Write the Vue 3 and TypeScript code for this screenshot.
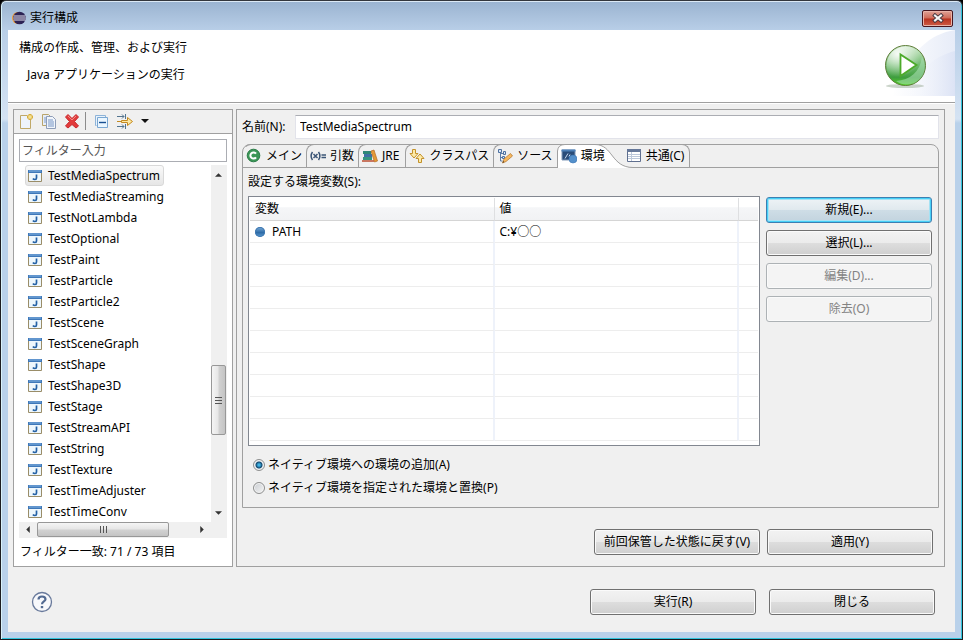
<script setup lang="ts">
import { ref } from 'vue'

interface Tab {
  id: string
  label: string
}

interface EnvVar {
  name: string
  value: string
}

const configs: string[] = [
  'TestMediaSpectrum', 'TestMediaStreaming', 'TestNotLambda', 'TestOptional',
  'TestPaint', 'TestParticle', 'TestParticle2', 'TestScene', 'TestSceneGraph',
  'TestShape', 'TestShape3D', 'TestStage', 'TestStreamAPI', 'TestString',
  'TestTexture', 'TestTimeAdjuster', 'TestTimeConv',
]
const selected = ref('TestMediaSpectrum')

const tabs: Tab[] = [
  { id: 'main', label: 'メイン' },
  { id: 'args', label: '引数' },
  { id: 'jre', label: 'JRE' },
  { id: 'classpath', label: 'クラスパス' },
  { id: 'source', label: 'ソース' },
  { id: 'env', label: '環境' },
  { id: 'common', label: '共通(C)' },
]
const activeTab = ref('env')

const variables: EnvVar[] = [{ name: 'PATH', value: 'C:¥○○' }]
const emptyRows = 9

const configName = ref('TestMediaSpectrum')
const filterText = ref('')
const mode = ref('append')
</script>

<template>
  <div class="window" lang="ja">
    <header class="titlebar">
      <svg class="logo" width="14" height="14" viewBox="0 0 14 14" aria-hidden="true">
        <circle cx="6" cy="7" r="6" fill="#f39a2e" />
        <circle cx="7.5" cy="7" r="6.3" fill="#2c2255" />
        <path d="M1.6 5h11.8M1.3 7h12.4M1.6 9h11.8" stroke="#e8e6f4" stroke-width="1" />
      </svg>
      <span class="title">実行構成</span>
      <button class="close" type="button" aria-label="閉じる">
        <svg width="12" height="10" viewBox="0 0 12 10">
          <path d="M3 2.500 9 7.500M9 2.500 3 7.500" stroke="#4b3a42" stroke-width="4" stroke-linecap="square" />
          <path d="M3 2.500 9 7.500M9 2.500 3 7.500" stroke="#f6f6f6" stroke-width="2" stroke-linecap="square" />
        </svg>
      </button>
    </header>

    <div class="client">
      <section class="banner">
        <div class="banner-text">
          <h1>構成の作成、管理、および実行</h1>
          <p>Java アプリケーションの実行</p>
        </div>
        <svg class="banner-art" width="75" height="66" viewBox="0 0 75 66" aria-hidden="true">
          <defs>
            <linearGradient id="sky" x1="0" y1="0" x2="1" y2="0">
              <stop offset="0" stop-color="#fff" />
              <stop offset="1" stop-color="#dde4f5" />
            </linearGradient>
            <linearGradient id="sky2" x1="0" y1="0" x2="1" y2="0">
              <stop offset="0" stop-color="#fff" stop-opacity="0" />
              <stop offset="1" stop-color="#dce3f5" />
            </linearGradient>
            <linearGradient id="ball" x1="0" y1="0" x2="0" y2="1">
              <stop offset="0" stop-color="#cfe9cb" />
              <stop offset="0.5" stop-color="#6db96c" />
              <stop offset="0.8" stop-color="#3f9e3f" />
              <stop offset="1" stop-color="#52d51e" />
            </linearGradient>
            <radialGradient id="shine" cx="0.3" cy="0.2" r="0.6">
              <stop offset="0" stop-color="#fff" stop-opacity="0.9" />
              <stop offset="1" stop-color="#fff" stop-opacity="0" />
            </radialGradient>
          </defs>
          <path d="M75 0C50 4 30 20 12 66H75Z" fill="url(#sky)" opacity="0.7" />
          <path d="M75 21C54 26 36 42 24 66H75Z" fill="url(#sky2)" />
          <ellipse cx="25" cy="56" rx="19" ry="2" fill="#a9b8a6" opacity="0.6" />
          <circle cx="25.500" cy="35.500" r="20" fill="url(#ball)" stroke="#5f7d3a" />
          <circle cx="25.500" cy="35.500" r="19" fill="url(#shine)" />
          <path d="M42 27A18 18 0 0 1 16 51C30 50 40 42 42 27Z" fill="#a6dcb0" opacity="0.6" />
          <path d="M20.500 24.500V46L36.500 35Z" fill="#fff" stroke="#4caa2a" stroke-width="1.800" />
        </svg>
      </section>

      <main class="panels">
        <aside class="sidebar">
          <div class="toolbar">
            <button type="button" aria-label="新規">
              <svg width="16" height="16" viewBox="0 0 16 16">
                <path d="M2.500 2.500H9l3.500 4V15.500H2.500Z" fill="#eef3fa" stroke="#c0a868" />
                <path d="M12 1v6M9 4h6" stroke="#d7ae3d" stroke-width="3" />
                <path d="M12 2v4M10 4h4" stroke="#fff2b0" />
              </svg>
            </button>
            <button type="button" aria-label="複製">
              <svg width="16" height="16" viewBox="0 0 16 16">
                <path d="M1.500 1.500h6l2 2v9h-8Z" fill="#e8eef7" stroke="#b9a46b" />
                <path d="M3 5h2M3 7h2M3 9h2" stroke="#7e9cc9" />
                <path d="M5.500 3.500h6l3 3v9h-9Z" fill="#f1f5fb" stroke="#8e9db8" />
                <path d="M7 7h5M7 9h6M7 11h6M7 13h6" stroke="#7795c4" />
              </svg>
            </button>
            <button type="button" aria-label="削除">
              <svg width="16" height="16" viewBox="0 0 16 16">
                <path d="M4 1.500 8 5.500 12 1.500 14.500 4 10.500 8.500 14.500 13 12 15 8 11.500 4 15 1.500 13 5.500 8.500 1.500 4Z" fill="#e23b3b" stroke="#c92a2f" />
                <path d="M4 3l4 4 4-4" stroke="#f48b84" fill="none" />
              </svg>
            </button>
            <span class="divider"></span>
            <button type="button" aria-label="すべて縮小表示">
              <svg width="16" height="16" viewBox="0 0 16 16">
                <path d="M3.500 12.500h-1v-10h10v2" fill="#eaf3fc" stroke="#8db3d8" />
                <path d="M4.500 4.500h10v10h-10Z" fill="#eaf6ff" stroke="#7aa7d2" />
                <path d="M6 9.500h7" stroke="#174f91" stroke-width="1.400" />
              </svg>
            </button>
            <button class="filter-button" type="button" aria-label="フィルター">
              <svg width="28" height="16" viewBox="0 0 28 16">
                <path d="M0 3.500h7M5 1.500l2 2-2 2M8.500 1v5M0 13.500h7M5 11.500l2 2-2 2M8.500 11v5" fill="none" stroke="#52748f" />
                <path d="M0 8.500h4" stroke="#c48a20" />
                <path d="M4.500 7.500h6v-3l5 4-5 4v-3h-6Z" fill="#fde9a4" stroke="#c48a20" />
              </svg>
              <svg width="8" height="16" viewBox="0 0 8 16"><path d="M0 6h8L4 10Z" fill="#111" /></svg>
            </button>
          </div>
          <div class="sidebar-body">
            <input v-model="filterText" class="filter" type="text" placeholder="フィルター入力" aria-label="フィルター入力" />
            <div class="list-area">
              <ul class="list" role="listbox" aria-label="構成">
                <li
                  v-for="name in configs"
                  :key="name"
                  role="option"
                  :aria-selected="name === selected"
                  :class="{ selected: name === selected }"
                  @click="selected = name"
                >
                  <svg width="14" height="12" viewBox="0 0 14 12" aria-hidden="true">
                    <path d="M.5.500h13v11H.5Z" fill="#eef7fd" stroke="#9a8d68" />
                    <path d="M0 0h14v3H0Z" fill="#3f78b9" />
                    <path d="M1 1h12" stroke="#86b5e4" />
                    <path d="M8.500 4.500v3.500q0 1.500-1.500 1.500T5 8.500" fill="none" stroke="#2461a5" stroke-width="1.700" />
                  </svg>
                  <span>{{ name }}</span>
                </li>
              </ul>
              <div class="vscroll">
                <button type="button" aria-label="上へ"><svg width="7" height="4" viewBox="0 0 8 4"><path d="M0 4 4 0 8 4Z" fill="#333" /></svg></button>
                <span class="vspace-before"></span>
                <span class="vthumb"><i></i><i></i><i></i></span>
                <span class="vspace-after"></span>
                <button type="button" aria-label="下へ"><svg width="7" height="4" viewBox="0 0 8 4"><path d="M0 0 4 4 8 0Z" fill="#333" /></svg></button>
              </div>
              <div class="hscroll">
                <button type="button" aria-label="左へ"><svg width="4" height="7" viewBox="0 0 4 8"><path d="M4 0 0 4 4 8Z" fill="#333" /></svg></button>
                <span class="hthumb"><i></i><i></i><i></i></span>
                <button type="button" aria-label="右へ"><svg width="4" height="7" viewBox="0 0 4 8"><path d="M0 0 4 4 0 8Z" fill="#333" /></svg></button>
              </div>
              <span class="corner"></span>
            </div>
            <p class="status">フィルター一致: 71 / 73 項目</p>
          </div>
        </aside>

        <section class="editor">
          <div class="name-row">
            <label for="config-name">名前(N):</label>
            <input id="config-name" v-model="configName" type="text" />
          </div>

          <div class="folder">
            <div class="tabs" role="tablist">
              <button
                v-for="tab in tabs"
                :key="tab.id"
                type="button"
                role="tab"
                class="tab"
                :class="[tab.id, { active: tab.id === activeTab }]"
                :aria-selected="tab.id === activeTab"
                @click="activeTab = tab.id"
              >
                <svg v-if="tab.id === activeTab" class="tab-shape" width="76" height="24" viewBox="0 0 76 24" aria-hidden="true">
                  <path d="M0 24V7Q1 .5 8 .5H38C56 .5 54 23.500 76 23.500V24Z" fill="#fff" />
                  <path d="M.5 24V7Q1 .5 8 .5H38C56 .5 54 23.500 76 23.500" fill="none" stroke="#a0a0a0" />
                </svg>
                <svg class="tab-icon" width="16" height="16" viewBox="0 0 16 16" aria-hidden="true">
                  <g v-if="tab.id === 'main'">
                    <circle cx="7.500" cy="7.500" r="6.300" fill="#3b9656" stroke="#2b7c47" />
                    <path d="M10 5.700A3.100 3.100 0 1 0 10 9.300" fill="none" stroke="#fff" stroke-width="2" />
                  </g>
                  <g v-else-if="tab.id === 'args'" fill="none" stroke="#3b5576" stroke-width="1.500">
                    <path d="M2.500 4Q-.3 8 2.500 12M8.500 4Q11.300 8 8.500 12M3.500 6l4 4M7.500 6l-4 4M11.500 7h4.500M11.500 9.500h4.500" />
                  </g>
                  <g v-else-if="tab.id === 'jre'">
                    <path d="M1 3h8v3H1Z" fill="#2d8777" />
                    <path d="M2 6h8v3H2Z" fill="#3f6fa5" />
                    <path d="M1 9h9v3H1Z" fill="#35957f" />
                    <path d="M9 3l3-1 3.500 11-3 1Z" fill="#e49a37" stroke="#b66a20" stroke-width=".7" />
                    <path d="M0 13h12" stroke="#bb4f32" stroke-width="1.500" />
                  </g>
                  <g v-else-if="tab.id === 'classpath'" fill="#fdeaa8" stroke="#c4922b">
                    <path d="M3.500 1.500h3v4h2.500L5 10 1 5.500h2.500Z" />
                    <path d="M9.500 14.500h3v-4H15L11 6 7 10.500h2.500Z" />
                  </g>
                  <g v-else-if="tab.id === 'source'">
                    <path d="M3.500 3v10M3.500 5.500h4M3.500 9.500h3M3.500 13h2" fill="none" stroke="#5b7ba6" />
                    <path d="M1.500 1.500h3v3h-3ZM6.500 3.500h2v3h-2ZM5.500 8.500h2v2h-2Z" fill="#dbe8f7" stroke="#4d70a0" />
                    <path d="M5.500 15l1.500-4 6.500-5.500 2 2.500L9 13.500Z" fill="#f7b85f" stroke="#b77c35" stroke-width=".8" />
                    <path d="M5.500 15l.8-2 1 1Z" fill="#4b351d" />
                  </g>
                  <g v-else-if="tab.id === 'env'">
                    <path d="M1 2h13v10H1Z" fill="#294c79" stroke="#8199b8" />
                    <path d="M.5 1.500h14v2H.5Z" fill="#4c80b8" />
                    <path d="M4 10.500l3-5M8 8.500l1-2" stroke="#c9d9ed" />
                    <circle cx="12" cy="11" r="4" fill="#5490cb" stroke="#3d76b4" stroke-width=".6" />
                  </g>
                  <g v-else>
                    <path d="M1.500 1.500h13v12h-13Z" fill="#fff" stroke="#5f6f8f" />
                    <path d="M1 1h14v3H1Z" fill="#657799" />
                    <path d="M5.500 4v9M2 6.500h12M2 8.500h12M2 10.500h12" stroke="#bcc8da" />
                  </g>
                </svg>
                <span class="tab-label">{{ tab.label }}</span>
              </button>
            </div>

            <div class="page">
              <h2 id="vars-label">設定する環境変数(S):</h2>
              <div class="vars">
                <div class="table-box">
                  <table aria-labelledby="vars-label">
                    <colgroup><col /><col /><col class="tail" /></colgroup>
                    <thead>
                      <tr><th scope="col">変数</th><th scope="col">値</th><th></th></tr>
                    </thead>
                    <tbody>
                      <tr v-for="v in variables" :key="v.name">
                        <td><div class="cell"><span class="dot"></span>{{ v.name }}</div></td>
                        <td>{{ v.value }}</td>
                        <td></td>
                      </tr>
                      <tr v-for="n in emptyRows" :key="n"><td></td><td></td><td></td></tr>
                    </tbody>
                  </table>
                </div>
                <div class="side-buttons">
                  <button class="btn focused" type="button">新規(E)...</button>
                  <button class="btn" type="button">選択(L)...</button>
                  <button class="btn" type="button" disabled>編集(D)...</button>
                  <button class="btn" type="button" disabled>除去(O)</button>
                </div>
              </div>
              <div class="radios">
                <label><input v-model="mode" type="radio" name="mode" value="append" />ネイティブ環境への環境の追加(A)</label>
                <label><input v-model="mode" type="radio" name="mode" value="replace" />ネイティブ環境を指定された環境と置換(P)</label>
              </div>
            </div>
          </div>

          <div class="editor-actions">
            <button class="btn" type="button">前回保管した状態に戻す(V)</button>
            <button class="btn" type="button">適用(Y)</button>
          </div>
        </section>
      </main>

      <footer class="footer">
        <button class="help" type="button" aria-label="ヘルプ">
          <svg width="22" height="22" viewBox="0 0 22 22">
            <circle cx="11" cy="11" r="9.500" fill="#f7f8fb" stroke="#68799b" stroke-width="1.300" />
            <path d="M7.500 8.500Q7.500 5.500 11 5.500T14.500 8.300C14.500 10.500 11 10.500 11 13.300" fill="none" stroke="#526a92" stroke-width="2.200" />
            <path d="M9.800 15h2.400v2.200H9.800Z" fill="#526a92" />
          </svg>
        </button>
        <div class="footer-actions">
          <button class="btn" type="button">実行(R)</button>
          <button class="btn" type="button">閉じる</button>
        </div>
      </footer>
    </div>
  </div>
</template>

<style>
body {
  background: #000;
}
</style>

<style scoped>
* {
  box-sizing: border-box;
}

.window,
.window button,
.window input {
  font-family: "Noto Sans", "Noto Sans CJK JP", sans-serif;
  font-size: 12px;
  line-height: 18px;
  color: #000;
}

.window {
  display: flex;
  flex-direction: column;
  min-height: 100vh;
  padding: 0 6px 7px;
  border: 1px solid #1c1c20;
  border-top-color: #33363c;
  border-radius: 6px 6px 0 0;
  background: linear-gradient(#9ab3d0, #b9cfe8 30px, #d5e3f3 118px, #b9d1ea 122px);
  box-shadow: inset 1px 0 #d9f2fa, inset -1px -1px #2fc4dc, inset 0 1px #dce9f5;
}

h1,
h2,
p,
ul {
  margin: 0;
  padding: 0;
  font-size: 12px;
  font-weight: normal;
}

button {
  padding: 0;
  border: 0;
  background: none;
}

svg {
  display: block;
  flex: none;
}

.titlebar {
  display: flex;
  align-items: center;
  height: 29px;
  padding: 5px 3px 0 5px;
  gap: 4px;
}

.title {
  flex: 1;
}

.close {
  display: flex;
  align-items: center;
  justify-content: center;
  width: 31px;
  height: 17px;
  border: 1px solid #47161f;
  border-radius: 2px;
  background: linear-gradient(#e0a297, #cf6a58 48%, #b8321f 52%, #cd5c46);
  box-shadow: inset 0 0 0 1px #e9b3a8;
}

.client {
  flex: 1;
  display: flex;
  flex-direction: column;
  margin: 0 1px;
  background: #f0f0f0;
}

.banner {
  display: flex;
  justify-content: space-between;
  height: 73px;
  border-bottom: 1px solid #a0a0a0;
  background: #fff;
}

.banner-text {
  display: flex;
  flex-direction: column;
  gap: 9px;
  padding: 9px 11px;
}

.banner-text p {
  padding-left: 8px;
}

.panels {
  flex: 1;
  display: flex;
  gap: 3px;
  padding: 5px 10px 0 5px;
  border-top: 1px solid #fff;
}

.sidebar {
  display: flex;
  flex-direction: column;
  width: 220px;
  border: 1px solid #a0a0a0;
  background: #fff;
}

.toolbar {
  display: flex;
  align-items: center;
  gap: 7px;
  height: 24px;
  padding: 0 0 1px 4px;
  border-bottom: 1px solid #a0a0a0;
  background: #f0f0f0;
}

.divider {
  width: 1px;
  height: 18px;
  margin: 0 0 0 -2px;
  background: #8c8c8c;
}

.filter-button {
  display: flex;
  margin-left: 1px;
}

.filter-button svg:first-child {
  margin-right: -4px;
}

.sidebar-body {
  flex: 1;
  display: flex;
  flex-direction: column;
  padding: 5px;
}

.filter {
  width: 100%;
  height: 23px;
  padding: 0 2px;
  border: 1px solid #abadb3;
  background: #fff;
}

.filter::placeholder {
  color: #555;
  opacity: 1;
}

.list-area {
  flex: 1;
  display: grid;
  grid-template-columns: 1fr 16px;
  grid-template-rows: 1fr 16px;
  margin-top: 3px;
}

.list {
  padding-left: 6px;
  list-style: none;
}

.list li {
  display: flex;
  align-items: center;
  gap: 6px;
  width: fit-content;
  height: 21px;
  padding: 0 3px 0 2px;
  border: 1px solid transparent;
  border-radius: 3px;
}

.list li.selected {
  border-color: #d9d9d9;
  background: linear-gradient(#fafafa, #e6e6e6);
}

.vscroll {
  display: flex;
  flex-direction: column;
  background: #f0f0f0;
}

.vscroll button {
  display: flex;
  align-items: center;
  justify-content: center;
  width: 15px;
  height: 19px;
}

.hscroll button {
  display: flex;
  align-items: center;
  justify-content: center;
  width: 18px;
  height: 15px;
}

.vspace-before {
  flex: 181;
}

.vspace-after {
  flex: 68;
}

.vthumb {
  display: flex;
  flex-direction: column;
  align-items: center;
  justify-content: center;
  gap: 2px;
  width: 15px;
  height: 70px;
  border: 1px solid #989898;
  border-radius: 2px;
  background: linear-gradient(90deg, #f5f5f5, #e6e6e6 48%, #d2d2d2 52%, #c4c4c4);
}

.vthumb i {
  width: 7px;
  height: 1px;
  background: #555;
}

.hscroll {
  display: flex;
  align-items: flex-start;
  background: #f0f0f0;
}

.hthumb {
  display: flex;
  align-items: center;
  justify-content: center;
  gap: 2px;
  width: 132px;
  height: 15px;
  margin-right: auto;
  border: 1px solid #989898;
  border-radius: 2px;
  background: linear-gradient(#f5f5f5, #e6e6e6 48%, #d2d2d2 52%, #c4c4c4);
}

.hthumb i {
  width: 1px;
  height: 7px;
  background: #555;
}

.corner {
  background: #f0f0f0;
}

.status {
  padding: 5px 1px 0;
}

.editor {
  flex: 1;
  display: flex;
  flex-direction: column;
  padding: 5px;
  border: 1px solid #a0a0a0;
}

.name-row {
  display: flex;
  align-items: center;
  gap: 5px;
}

.name-row label {
  width: 48px;
  white-space: nowrap;
}

.name-row input {
  flex: 1;
  height: 24px;
  padding: 0 4px 1px;
  border: 1px solid #e2e3ea;
  border-top-color: #abadb3;
  background: #fff;
}

.folder {
  flex: 1;
  display: flex;
  flex-direction: column;
  margin-top: 5px;
  border: 1px solid #a0a0a0;
  border-radius: 8px 8px 0 0;
}

.tabs {
  display: flex;
  height: 24px;
  margin-top: -1px;
  box-shadow: inset 0 -1px #a0a0a0;
}

.tab {
  position: relative;
  display: flex;
  align-items: center;
  gap: 4px;
  padding: 0 4px 1px 3px;
  border-top: 1px solid #a0a0a0;
  border-left: 1px solid #a0a0a0;
  border-top-left-radius: 8px;
  white-space: nowrap;
}

.tab.main {
  padding-left: 2px;
  border-left-color: transparent;
}

.tab.jre {
  padding-right: 6px;
}

.tab.active {
  z-index: 1;
  padding-right: 20px;
  border-color: transparent;
}

.tab-shape {
  position: absolute;
  top: -1px;
  left: -1px;
}

.tab-icon,
.tab-label {
  position: relative;
}

.tab.common {
  padding: 0 5px 1px 0;
  border-left-color: transparent;
  border-right: 1px solid #a0a0a0;
  border-radius: 0 8px 0 0;
}

.page {
  flex: 1;
  display: flex;
  flex-direction: column;
  padding: 5px 6px 0 5px;
}

.vars {
  display: grid;
  grid-template-columns: 1fr 166px;
  gap: 6px;
  margin-top: 5px;
}

.table-box {
  height: 250px;
  padding: 1px;
  border: 1px solid #828790;
  background: #fff;
}

table {
  width: 100%;
  table-layout: fixed;
  border-collapse: separate;
  border-spacing: 0;
}

.tail {
  width: 19px;
}

th,
td {
  height: 22px;
  padding: 0 5px;
  border-right: 2px solid #eef2fa;
  border-bottom: 1px solid #ededed;
  font-weight: normal;
  text-align: left;
}

th {
  height: 23px;
  border-right: 1px solid #dedfe1;
  border-bottom-color: #d5d5d5;
  background: linear-gradient(#fff 40%, #f5f6f8 44%, #f1f2f4);
}

th:last-child,
td:last-child {
  border-right: 0;
}

.cell {
  display: flex;
  align-items: center;
  gap: 7px;
}

.dot {
  width: 10px;
  height: 10px;
  border-radius: 50%;
  background: linear-gradient(#7badd9, #2f6ca8 55%, #5b9bd2);
  box-shadow: inset 0 0 0 1px #4078b0;
}

.side-buttons {
  display: flex;
  flex-direction: column;
  gap: 7px;
  padding-top: 1px;
}

.window .btn {
  width: 166px;
  height: 26px;
  border: 1px solid #707070;
  border-radius: 3px;
  background: linear-gradient(#f2f2f2, #ebebeb 49%, #dddddd 51%, #cfcfcf);
  box-shadow: inset 0 0 0 1px #fafafa;
  white-space: nowrap;
}

.window .btn.focused {
  border-color: #3c7fb1;
  background: linear-gradient(#eef3f6, #e0e9ee 49%, #cedde6 51%, #c2d3de);
  box-shadow: inset 0 0 0 1px #46d0f7, inset 0 0 0 2px #a5e2f4;
}

.window .btn:disabled {
  border-color: #adb2b5;
  background: #f4f4f4;
  color: #838383;
}

.radios {
  display: flex;
  flex-direction: column;
  gap: 5px;
  padding: 10px 5px;
}

.radios label {
  display: flex;
  align-items: center;
  gap: 3px;
}

.radios input {
  appearance: none;
  width: 12px;
  height: 12px;
  margin: 0;
  border: 1px solid #8e8f8f;
  border-radius: 50%;
  background: linear-gradient(135deg, #c9cdd2, #f5f5f5);
  box-shadow: inset 0 0 0 1px #f4f4f4;
}

.radios input:checked {
  background: radial-gradient(circle, #3fb2e3 1px, #12476e 3px, #dfe5ea 4px);
}

.editor-actions {
  display: flex;
  justify-content: flex-end;
  gap: 7px;
  padding: 21px 6px 6px;
}

.footer {
  display: flex;
  align-items: center;
  justify-content: space-between;
  padding: 22px 20px 17px 23px;
}

.footer-actions {
  display: flex;
  gap: 13px;
}
</style>
